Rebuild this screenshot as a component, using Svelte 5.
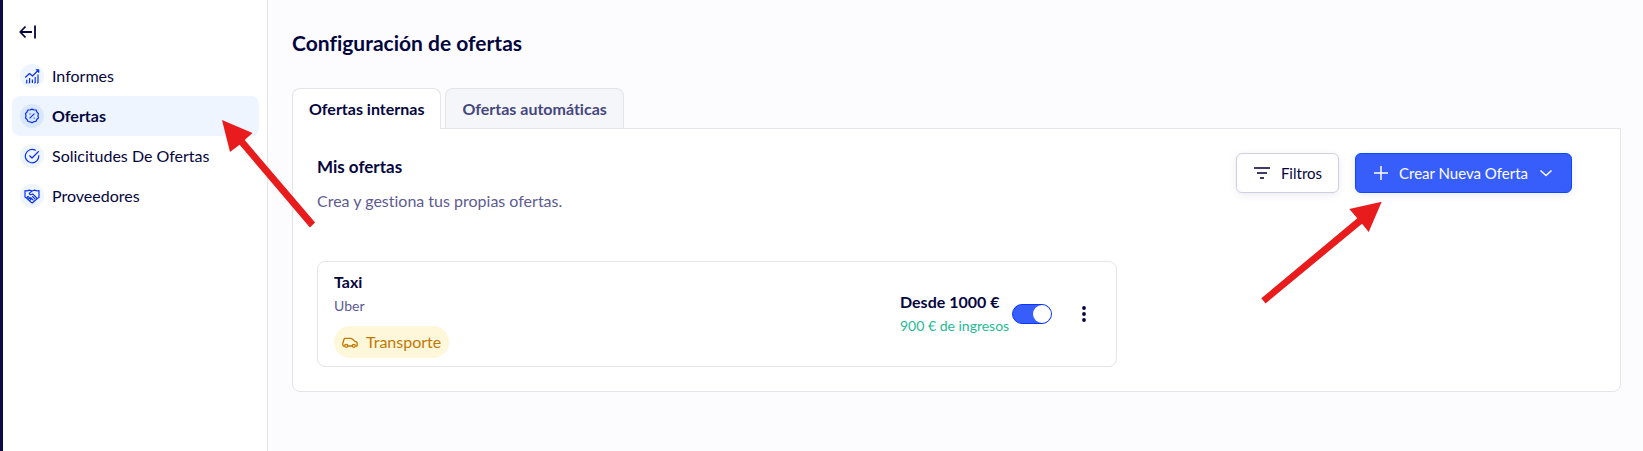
<script lang="ts">
	let active: string = 'Ofertas';
	let tab: string = 'internas';
	let enabled: boolean = true;

	const links = ['Informes', 'Ofertas', 'Solicitudes De Ofertas', 'Proveedores'];
	const tabs = [
		{ id: 'internas', label: 'Ofertas internas' },
		{ id: 'automaticas', label: 'Ofertas automáticas' }
	];
</script>

<div class="layout">
	<aside class="sidebar">
		<button class="collapse" aria-label="Contraer menú">
			<svg width="18" height="14" viewBox="0 0 18 14"><path d="M6.500 1.500 1.200 7l5.300 5.500M1.500 7h11.500M16 .5v13" /></svg>
		</button>
		<nav>
			{#each links as link}
				<a href="#{link}" class="link" class:active={active === link} on:click={() => (active = link)}>
					<span class="bubble">
						<svg width="16" height="16" viewBox="0 0 16 16">
							{#if link === 'Informes'}
								<path d="M1.200 9.500 5.500 5.500 8.500 8l6-6M11.800 1.800h2.900v2.900M2.800 15v-3.200M5.600 15v-5M8.400 15v-3.500M11.200 15V9M14 15V6.500M1.800 15h1M4.600 15h1M10.200 15h1M13 15h1" />
							{:else if link === 'Ofertas'}
								<path d="M8 1.100 10 1.900l2.200.1.700 2 1.500 1.600-.4 2.200.4 2.200-1.600 1.500-.9 1.900-2.100.3L8 14.800l-1.900-1-2.100-.3-.9-1.900L1.500 10l.5-2.200-.5-2.200L3 4l.8-2 2.200-.1z" />
								<path d="m5.600 10.400 4.800-4.800M5.600 5.900h.9M9.700 10.100h.9" />
							{:else if link === 'Solicitudes De Ofertas'}
								<path d="M14.700 7.300A6.700 6.700 0 1 1 11.700 2.500M5.400 7.500 8 10l6.800-6.700" />
							{:else}
								<path d="M1 2.500c1.600.6 3 .3 4.400-.4L8 3l2.600-.9c1.400.7 2.800 1 4.400.4v7l-2 1.200L8.300 15l-1.800-1.200-4-3.800L1 9z" />
								<path d="M8 3 5.200 5.400c.5 1.500 2 1.600 3.400.5l4.400 4.300M8.200 8.200l3 3M6.500 9.400l3 3M2.500 10l1.600-1.600 1.400 1.400-.9 1 1.200-.8 1.200 1.200-1 1.200" />
							{/if}
						</svg>
					</span>
					{link}
				</a>
			{/each}
		</nav>
	</aside>

	<main>
		<h1>Configuración de ofertas</h1>
		<div class="tabs" role="tablist">
			{#each tabs as t}
				<button role="tab" class="tab" class:selected={tab === t.id} aria-selected={tab === t.id} on:click={() => (tab = t.id)}>{t.label}</button>
			{/each}
		</div>
		<section class="panel">
			<header>
				<div>
					<h2>Mis ofertas</h2>
					<p class="intro">Crea y gestiona tus propias ofertas.</p>
				</div>
				<div class="actions">
					<button class="btn">
						<svg class="filter" width="18" height="14" viewBox="0 0 18 14"><path d="M1 2h16M4 7h10M7 12h4" /></svg>
						Filtros
					</button>
					<button class="btn primary">
						<svg width="14" height="14" viewBox="0 0 14 14"><path d="M7 0v14M0 7h14" /></svg>
						Crear Nueva Oferta
						<svg width="14" height="14" viewBox="0 0 14 14"><path d="m1.500 4.500 5.500 5 5.500-5" /></svg>
					</button>
				</div>
			</header>

			<article class="offer">
				<div class="info">
					<h3>Taxi</h3>
					<p class="small">Uber</p>
					<span class="tag">
						<svg width="16" height="12" viewBox="0 0 16 12">
							<path d="M2.500 10h-1C.9 10 .8 8.800.8 7.300L2 3.200c.2-.6.6-.9 1.200-.9h5.300c.8 0 1.300.3 1.800.8l2.300 2c1.700.4 2.600 1.100 2.600 2.300v2c0 .4-.3.600-.6.600h-.9M6 10h4" />
							<circle cx="4.200" cy="9.800" r="1.500" /><circle cx="11.800" cy="9.800" r="1.500" />
						</svg>
						Transporte
					</span>
				</div>
				<div class="price">
					<h3>Desde 1000 €</h3>
					<p class="small income">900 € de ingresos</p>
				</div>
				<input type="checkbox" class="switch" aria-label="Activar oferta" bind:checked={enabled} />
				<button class="more" aria-label="Más opciones">
					<svg width="4" height="16" viewBox="0 0 4 16"><circle cx="2" cy="2" r="1.900" /><circle cx="2" cy="8" r="1.900" /><circle cx="2" cy="14" r="1.900" /></svg>
				</button>
			</article>
		</section>
	</main>

	<svg class="pointer to-menu" width="96" height="110" viewBox="0 0 96 110">
		<path d="M2 2 32.500 15 24.700 22 95.100 104.600 89.900 109.400 19.600 26.700 10 34z" />
	</svg>
	<svg class="pointer to-create" width="122" height="104" viewBox="0 0 122 104">
		<path d="M121.700 1.700 108.700 32 102 23.700 5.600 103.400 1.300 98.300 97.300 18.300 89.300 9z" />
	</svg>
</div>

<style>
	:global(body) {
		background: #fcfcff;
	}
	.layout {
		--ink: #05053d;
		--line: #e4e4e9;
		position: relative;
		display: flex;
		min-height: 100vh;
		box-sizing: border-box;
		border-left: 3px solid #0b0b45;
		font-family: Lato, "Liberation Sans", sans-serif;
		font-size: 16px;
		font-variant-ligatures: none;
		line-height: 24px;
		color: var(--ink);
	}
	button {
		font: inherit;
		font-variant-ligatures: none;
		color: inherit;
		cursor: pointer;
	}
	svg {
		flex: none;
		fill: none;
		stroke: currentColor;
		stroke-width: 1.5;
		stroke-linejoin: round;
	}
	h1, h2, h3, p {
		margin: 0;
	}
	.sidebar {
		flex: none;
		width: 265px;
		padding: 20px 8px 0 9px;
		box-sizing: border-box;
		background: #fff;
		border-right: 1px solid var(--line);
	}
	.collapse {
		display: flex;
		align-items: center;
		height: 24px;
		margin: 0 0 12px;
		padding: 0 7px;
		border: 0;
		background: none;
	}
	.collapse svg {
		stroke-width: 1.8;
	}
	.link {
		display: flex;
		align-items: center;
		gap: 8px;
		height: 40px;
		padding: 0 8px;
		border-radius: 8px;
		color: var(--ink);
		text-decoration: none;
	}
	.link.active {
		background: #eef5ff;
		font-weight: 700;
	}
	.bubble {
		display: flex;
		align-items: center;
		justify-content: center;
		width: 24px;
		height: 24px;
		border-radius: 50%;
		background: #eef5ff;
		color: #0b31f0;
	}
	.bubble svg {
		stroke-width: 1.2;
	}
	.active .bubble {
		background: #d9e8ff;
	}
	main {
		flex: 1;
		min-width: 0;
		padding: 27px 22px 24px 24px;
	}
	h1 {
		margin-bottom: 29px;
		font-size: 21px;
		line-height: 32px;
	}
	.tabs {
		display: flex;
		gap: 4px;
	}
	.tab {
		height: 40px;
		padding: 0 16px;
		border: 1px solid var(--line);
		border-bottom: 0;
		border-radius: 8px 8px 0 0;
		background: #f5f6f9;
		color: #46467f;
		font-weight: 700;
	}
	.tab.selected {
		z-index: 1;
		height: 41px;
		margin-bottom: -1px;
		background: #fff;
		color: var(--ink);
	}
	.panel {
		padding: 24px;
		border: 1px solid var(--line);
		border-radius: 0 0 8px 8px;
		background: #fff;
	}
	header {
		display: flex;
		justify-content: space-between;
		margin-bottom: 48px;
		padding-right: 24px;
	}
	h2 {
		font-size: 17px;
		line-height: 28px;
	}
	.intro {
		margin-top: 8px;
		color: #5c5c92;
	}
	.actions {
		display: flex;
		align-items: flex-start;
		gap: 16px;
	}
	.btn {
		display: flex;
		align-items: center;
		gap: 10px;
		height: 40px;
		padding: 0 16px;
		border: 1px solid #cfcfe3;
		border-radius: 6px;
		background: #fff;
		box-shadow: 0 2px 8px rgba(5, 5, 61, 0.08);
		font-size: 15px;
	}
	.filter {
		color: #3c3c68;
		stroke-width: 2;
	}
	.primary {
		gap: 11px;
		padding: 0 18px;
		background: #375dfb;
		border-color: #0d48ff;
		color: #fff;
	}
	.offer {
		display: flex;
		align-items: center;
		box-sizing: border-box;
		max-width: 800px;
		padding: 8px 16px;
		border: 1px solid var(--line);
		border-radius: 8px;
	}
	.info {
		flex: 1;
	}
	h3 {
		font-size: 16px;
		line-height: 24px;
	}
	.small {
		font-size: 14px;
		line-height: 24px;
		color: #5c5c92;
	}
	.tag {
		display: flex;
		align-items: center;
		gap: 8px;
		width: max-content;
		height: 32px;
		margin-top: 8px;
		padding: 0 8px;
		border-radius: 16px;
		background: #fff7d9;
		color: #c27803;
	}
	.tag svg {
		stroke-width: 1.3;
	}
	.price {
		width: 112px;
		white-space: nowrap;
	}
	.price .income {
		color: #1fba94;
	}
	.switch {
		appearance: none;
		display: flex;
		width: 40px;
		height: 20px;
		margin: 0 24px 0 0;
		padding: 1px;
		box-sizing: border-box;
		border-radius: 10px;
		background: #c5c5d8;
		cursor: pointer;
	}
	.switch::before {
		content: "";
		width: 18px;
		height: 18px;
		border-radius: 50%;
		background: #fff;
	}
	.switch:checked {
		justify-content: flex-end;
		background: #375dfb;
		border: 1px solid #0d35ff;
		padding: 0;
	}
	.more {
		display: flex;
		justify-content: center;
		width: 16px;
		margin-right: 8px;
		padding: 0;
		border: 0;
		background: none;
	}
	.more svg {
		fill: currentColor;
		stroke: none;
	}
	/* annotation arrows drawn over the page */
	.pointer {
		position: absolute;
		fill: #e81c1c;
		stroke: none;
		pointer-events: none;
	}
	.to-menu {
		top: 118px;
		left: 217px;
	}
	.to-create {
		top: 200px;
		right: 261px;
	}
</style>
